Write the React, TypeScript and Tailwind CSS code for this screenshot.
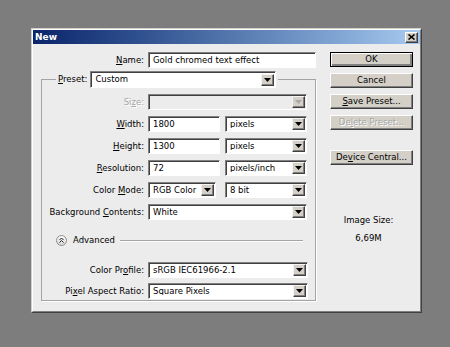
import React from 'react';

type Kids = { children?: React.ReactNode };

const Key = ({ children }: Kids) => (
    <span className="underline decoration-[1px] underline-offset-[1px]">{children}</span>
);

const Arrow = ({ disabled }: { disabled?: boolean }) => (
    <div className="mr-[1px] flex h-[12px] w-[13px] shrink-0 items-center justify-center border border-t-[#f4f4f4] border-l-[#f4f4f4] border-r-[#404040] border-b-[#404040] bg-[#d4d0c8] shadow-[inset_-1px_-1px_0_#808080]">
        <svg width="7" height="4" viewBox="0 0 7 4">
            <polygon points="0,0 7,0 3.5,4" fill={disabled ? '#a8a8a8' : '#000'} />
        </svg>
    </div>
);

const Sunken = ({ className = '', disabled, children }: Kids & { className?: string; disabled?: boolean }) => (
    <div
        className={`flex h-[16px] items-center border border-t-[#808080] border-l-[#808080] border-r-white border-b-white shadow-[inset_1px_1px_0_#404040] ${disabled ? 'bg-[#ececec]' : 'bg-white'} ${className}`}
    >
        {children}
    </div>
);

const Select = ({ value, className = '', disabled }: { value?: string; className?: string; disabled?: boolean }) => (
    <Sunken className={className} disabled={disabled}>
        <span className="flex-1 truncate pl-[4px] leading-none">{value}</span>
        <Arrow disabled={disabled} />
    </Sunken>
);

const Input = ({ value, className = '' }: { value: string; className?: string }) => (
    <Sunken className={className}>
        <span className="pl-[4px] leading-none">{value}</span>
    </Sunken>
);

const Row = ({ label, children, disabled }: Kids & { label: React.ReactNode; disabled?: boolean }) => (
    <div className="flex h-[16px] items-center">
        <div
            className={`w-[102px] text-right leading-none ${disabled ? 'text-[#a6a6a6] [text-shadow:1px_1px_0_#fff]' : 'text-black'}`}
        >
            {label}
        </div>
        <div className="ml-[4px] flex items-center">{children}</div>
    </div>
);

const Btn = ({ children, isDefault, disabled }: Kids & { isDefault?: boolean; disabled?: boolean }) => (
    <div
        className={`flex h-[15px] w-[83px] items-center justify-center bg-[#d4d0c8] leading-none ${
            isDefault
                ? 'border border-black shadow-[inset_1px_1px_0_#fff,inset_-2px_-2px_0_#808080]'
                : 'border border-t-white border-l-white border-r-[#404040] border-b-[#404040] shadow-[inset_-1px_-1px_0_#808080]'
        } ${disabled ? 'text-[#a6a6a6] [text-shadow:1px_1px_0_#fff]' : 'text-black'}`}
    >
        {children}
    </div>
);

const App = () => {
    return (
        <div className="h-[347px] w-[450px] overflow-hidden bg-[#7d7d7d] pt-[28px] pl-[31px] font-['DejaVu_Sans',sans-serif] text-[8.5px]">
            <div className="h-[285px] w-[391px] border border-t-[#d4d0c8] border-l-[#d4d0c8] border-r-[#404040] border-b-[#404040] bg-[#ececec]">
                <div className="flex h-full flex-col border border-t-white border-l-white border-r-[#808080] border-b-[#808080]">
                    {/* title bar */}
                    <div className="flex h-[14px] items-center justify-between bg-gradient-to-r from-[#0a246a] to-[#a6caf0] pl-[2px] pr-[2px]">
                        <span className="text-[9px] leading-none font-bold text-white">New</span>
                        <div className="flex h-[11px] w-[13px] items-center justify-center border border-t-white border-l-white border-r-[#404040] border-b-[#404040] bg-[#d4d0c8] shadow-[inset_-1px_-1px_0_#808080]">
                            <svg width="7" height="6" viewBox="0 0 7 6">
                                <path d="M0.5 0.5 L6.5 5.5 M6.5 0.5 L0.5 5.5" stroke="#000" strokeWidth="1.6" />
                            </svg>
                        </div>
                    </div>

                    <div className="flex flex-1 pt-[8px]">
                        {/* left column */}
                        <div className="flex w-[283px] flex-col pl-[8px]">
                            <div className="flex h-[16px] items-center">
                                <div className="w-[103px] text-right leading-none">
                                    <Key>N</Key>ame:
                                </div>
                                <Input value="Gold chromed text effect" className="ml-[4px] w-[168px]" />
                            </div>

                            <fieldset className="mt-[3px] w-[275px] border border-[#a4a4a4] pb-[1px] shadow-[1px_1px_0_#fff]">
                                <legend className="ml-[14px] px-[2px]">
                                    <div className="flex h-[17px] items-center gap-[3px]">
                                        <span className="leading-none">
                                            <Key>P</Key>reset:
                                        </span>
                                        <Select value="Custom" className="h-[17px] w-[186px]" />
                                    </div>
                                </legend>

                                <div className="mt-[6px] flex flex-col gap-[6px]">
                                    <Row
                                        disabled
                                        label={
                                            <>
                                                Si<Key>z</Key>e:
                                            </>
                                        }
                                    >
                                        <Select disabled className="w-[159px]" />
                                    </Row>
                                    <Row
                                        label={
                                            <>
                                                <Key>W</Key>idth:
                                            </>
                                        }
                                    >
                                        <Input value="1800" className="w-[72px]" />
                                        <Select value="pixels" className="ml-[5px] w-[82px]" />
                                    </Row>
                                    <Row
                                        label={
                                            <>
                                                <Key>H</Key>eight:
                                            </>
                                        }
                                    >
                                        <Input value="1300" className="w-[72px]" />
                                        <Select value="pixels" className="ml-[5px] w-[82px]" />
                                    </Row>
                                    <Row
                                        label={
                                            <>
                                                <Key>R</Key>esolution:
                                            </>
                                        }
                                    >
                                        <Input value="72" className="w-[72px]" />
                                        <Select value="pixels/inch" className="ml-[5px] w-[82px]" />
                                    </Row>
                                    <Row
                                        label={
                                            <>
                                                Color <Key>M</Key>ode:
                                            </>
                                        }
                                    >
                                        <Select value="RGB Color" className="w-[68px]" />
                                        <Select value="8 bit" className="ml-[9px] w-[82px]" />
                                    </Row>
                                    <Row
                                        label={
                                            <>
                                                Background <Key>C</Key>ontents:
                                            </>
                                        }
                                    >
                                        <Select value="White" className="w-[159px]" />
                                    </Row>
                                </div>

                                {/* advanced toggle */}
                                <div className="mt-[15px] flex h-[11px] items-center pl-[14px] pr-[12px]">
                                    <svg width="11" height="11" viewBox="0 0 11 11" className="shrink-0">
                                        <defs>
                                            <linearGradient id="adv" x1="0" y1="0" x2="0" y2="1">
                                                <stop offset="0" stopColor="#ffffff" />
                                                <stop offset="1" stopColor="#d2d2d2" />
                                            </linearGradient>
                                        </defs>
                                        <circle cx="5.5" cy="5.5" r="5" fill="url(#adv)" stroke="#8e8e8e" />
                                        <path d="M3.5 5 L5.5 3 L7.5 5 M3.5 7.5 L5.5 5.5 L7.5 7.5" stroke="#222" strokeWidth="1" fill="none" />
                                    </svg>
                                    <span className="ml-[6px] leading-none">Advanced</span>
                                    <div className="ml-[5px] h-[2px] flex-1 border-t border-t-[#a4a4a4] border-b border-b-white" />
                                </div>

                                <div className="mt-[16px] flex flex-col gap-[5px]">
                                    <Row
                                        label={
                                            <>
                                                Color Pr<Key>o</Key>file:
                                            </>
                                        }
                                    >
                                        <Select value="sRGB IEC61966-2.1" className="w-[160px]" />
                                    </Row>
                                    <Row
                                        label={
                                            <>
                                                Pi<Key>x</Key>el Aspect Ratio:
                                            </>
                                        }
                                    >
                                        <Select value="Square Pixels" className="w-[160px]" />
                                    </Row>
                                </div>
                            </fieldset>
                        </div>

                        {/* right column */}
                        <div className="ml-[14px] flex w-[83px] flex-col items-center">
                            <div className="flex flex-col gap-[6px]">
                                <Btn isDefault>OK</Btn>
                                <Btn>Cancel</Btn>
                                <Btn>
                                    <Key>S</Key>ave Preset...
                                </Btn>
                                <Btn disabled>
                                    De<Key>l</Key>ete Preset...
                                </Btn>
                            </div>
                            <div className="mt-[20px]">
                                <Btn>
                                    De<Key>v</Key>ice Central...
                                </Btn>
                            </div>
                            <div className="mt-[51px] pr-[6px] leading-none">Image Size:</div>
                            <div className="mt-[9px] pr-[6px] leading-none">6,69M</div>
                        </div>
                    </div>
                </div>
            </div>
        </div>
    );
};

export default App;
